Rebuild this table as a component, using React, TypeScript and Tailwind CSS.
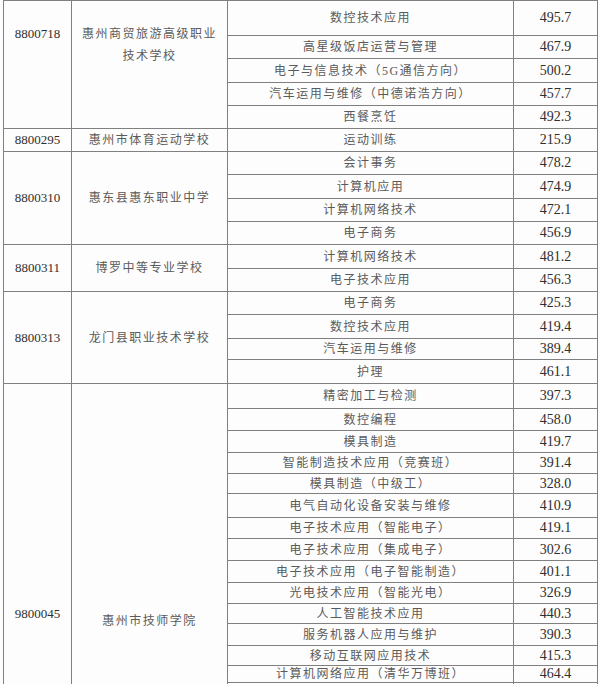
import React from 'react'

type Row = { major: string; score: string; h: number }
type Group = {
  code: string
  school: string[]
  rows: Row[]
  top?: { code: string; school: string }
}

const groups: Group[] = [
  {
    code: '8800718',
    school: ['惠州商贸旅游高级职业', '技术学校'],
    top: { code: 'pt-[22px]', school: 'pt-[22px]' },
    rows: [
      { major: '数控技术应用', score: '495.7', h: 35 },
      { major: '高星级饭店运营与管理', score: '467.9', h: 23 },
      { major: '电子与信息技术（5G通信方向）', score: '500.2', h: 24 },
      { major: '汽车运用与维修（中德诺浩方向）', score: '457.7', h: 23 },
      { major: '西餐烹饪', score: '492.3', h: 23 },
    ],
  },
  {
    code: '8800295',
    school: ['惠州市体育运动学校'],
    rows: [{ major: '运动训练', score: '215.9', h: 22 }],
  },
  {
    code: '8800310',
    school: ['惠东县惠东职业中学'],
    rows: [
      { major: '会计事务', score: '478.2', h: 23 },
      { major: '计算机应用', score: '474.9', h: 24 },
      { major: '计算机网络技术', score: '472.1', h: 23 },
      { major: '电子商务', score: '456.9', h: 23 },
    ],
  },
  {
    code: '8800311',
    school: ['博罗中等专业学校'],
    rows: [
      { major: '计算机网络技术', score: '481.2', h: 24 },
      { major: '电子技术应用', score: '456.3', h: 23 },
    ],
  },
  {
    code: '8800313',
    school: ['龙门县职业技术学校'],
    rows: [
      { major: '电子商务', score: '425.3', h: 23 },
      { major: '数控技术应用', score: '419.4', h: 24 },
      { major: '汽车运用与维修', score: '389.4', h: 21 },
      { major: '护理', score: '461.1', h: 24 },
    ],
  },
  {
    code: '9800045',
    school: ['惠州市技师学院'],
    top: { code: 'pt-[219px]', school: 'pt-[226px]' },
    rows: [
      { major: '精密加工与检测', score: '397.3', h: 25 },
      { major: '数控编程', score: '458.0', h: 22 },
      { major: '模具制造', score: '419.7', h: 22 },
      { major: '智能制造技术应用（竞赛班）', score: '391.4', h: 21 },
      { major: '模具制造（中级工）', score: '328.0', h: 20 },
      { major: '电气自动化设备安装与维修', score: '410.9', h: 24 },
      { major: '电子技术应用（智能电子）', score: '419.1', h: 21 },
      { major: '电子技术应用（集成电子）', score: '302.6', h: 22 },
      { major: '电子技术应用（电子智能制造）', score: '401.1', h: 22 },
      { major: '光电技术应用（智能光电）', score: '326.9', h: 21 },
      { major: '人工智能技术应用', score: '440.3', h: 20 },
      { major: '服务机器人应用与维护', score: '390.3', h: 22 },
      { major: '移动互联网应用技术', score: '415.3', h: 20 },
      { major: '计算机网络应用（清华万博班）', score: '464.4', h: 17 },
      { major: '', score: '', h: 30 },
    ],
  },
]

const cell = 'border border-[#808080] p-0 text-center'
const cjk = "text-[12px] tracking-[1.5px] text-[#5a5a5a] font-['Liberation_Serif','Noto_Sans_CJK_SC',serif]"
const num = "text-[#2e2e2e] font-['Liberation_Serif',serif]"

export default function App() {
  return (
    <div className="w-[600px] h-[684px] overflow-hidden bg-[#fdfdfd]">
      <table className="ml-[3px] w-[594px] table-fixed border-collapse">
        <colgroup>
          <col className="w-[68px]" />
          <col className="w-[156px]" />
          <col className="w-[286px]" />
          <col className="w-[84px]" />
        </colgroup>
        <tbody>
          {groups.map((g) =>
            g.rows.map((r, i) => (
              <tr key={g.code + i} style={{ height: r.h }}>
                {i === 0 && (
                  <>
                    <td
                      rowSpan={g.rows.length}
                      className={`${cell} ${num} text-[13px] leading-[22px] ${
                        g.top ? 'align-top ' + g.top.code : 'align-middle'
                      }`}
                    >
                      {g.code}
                    </td>
                    <td
                      rowSpan={g.rows.length}
                      className={`${cell} ${cjk} leading-[22px] ${
                        g.top ? 'align-top ' + g.top.school : 'align-middle'
                      }`}
                    >
                      {g.school.map((s) => (
                        <div key={s}>{s}</div>
                      ))}
                    </td>
                  </>
                )}
                <td className={`${cell} ${cjk} leading-[16px] whitespace-nowrap`}>{r.major}</td>
                <td className={`${cell} ${num} text-[14px] leading-[16px]`}>{r.score}</td>
              </tr>
            ))
          )}
        </tbody>
      </table>
    </div>
  )
}
